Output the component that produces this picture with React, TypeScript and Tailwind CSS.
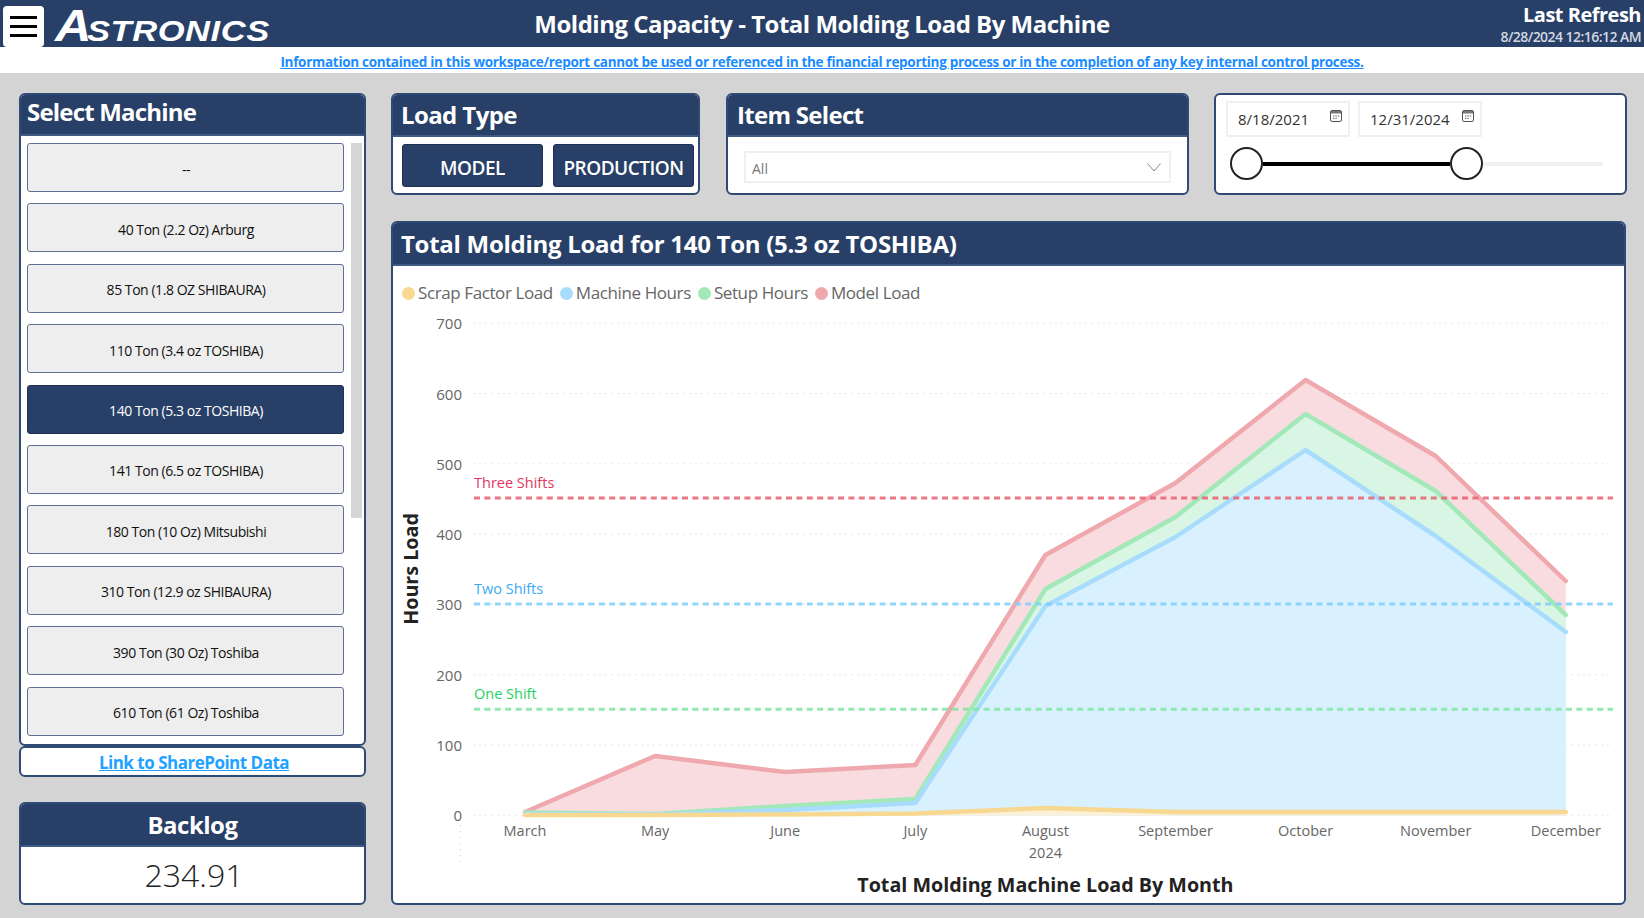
const machines = [
  '--',
  '40 Ton (2.2 Oz) Arburg',
  '85 Ton (1.8 OZ SHIBAURA)',
  '110 Ton (3.4 oz TOSHIBA)',
  '140 Ton (5.3 oz TOSHIBA)',
  '141 Ton (6.5 oz TOSHIBA)',
  '180 Ton (10 Oz) Mitsubishi',
  '310 Ton (12.9 oz SHIBAURA)',
  '390 Ton (30 Oz) Toshiba',
  '610 Ton (61 Oz) Toshiba',
];

const months = ['March', 'May', 'June', 'July', 'August', 'September', 'October', 'November', 'December'];
const monthX = months.map((_, i) => 525 + i * 130.1);
const baseY = 815.3;

// y pixel of each series per month, in page coordinates
const series = [
  { name: 'model', fill: '#f8dcdf', line: '#efa9ae', ys: [812, 756, 772, 765, 555, 483, 380, 456, 581] },
  { name: 'setup', fill: '#d9f5e3', line: '#a3e8b9', ys: [812.5, 814, 806, 799, 589, 517, 414, 491, 615] },
  { name: 'machine', fill: '#d9f1ff', line: '#a8dcfd', ys: [814, 814.5, 810, 803, 606, 537, 450, 536, 632] },
  { name: 'scrap', fill: '#fdf0d8', line: '#f7d890', ys: [815, 815, 814.5, 813.5, 808, 812, 812, 812, 812] },
];

const yTicks = [0, 100, 200, 300, 400, 500, 600, 700];
const shifts = [
  { label: 'Three Shifts', y: 498, line: '#e8606e', text: '#e0385f' },
  { label: 'Two Shifts', y: 604, line: '#7fcffb', text: '#3ca9f5' },
  { label: 'One Shift', y: 709.3, line: '#7fe6a3', text: '#1fd163' },
];
const legend = [
  { label: 'Scrap Factor Load', color: 'bg-[#f8d98f]' },
  { label: 'Machine Hours', color: 'bg-[#a8dcfd]' },
  { label: 'Setup Hours', color: 'bg-[#a3e8b9]' },
  { label: 'Model Load', color: 'bg-[#efa9ae]' },
];

const CalendarIcon = () => (
  <svg width="12" height="12" viewBox="0 0 12 12" className="shrink-0">
    <rect x="0.5" y="0.5" width="11" height="11" rx="1.5" fill="none" stroke="#555" />
    <rect x="1" y="1" width="10" height="2.5" fill="#777" />
    <path d="M3 6h1.4M5.4 6h1.4M7.8 6h1.4M3 8.4h1.4M5.4 8.4h1.4" stroke="#555" />
  </svg>
);

const DateBox = ({ value }: { value: string }) => (
  <div className="flex h-[36px] w-[124px] items-center justify-between border-2 border-[#f0f0f0] pr-[6px] pl-[10px] text-[15px] text-[#333]">
    <span>{value}</span>
    <span className="-mt-[6px]">
      <CalendarIcon />
    </span>
  </div>
);

const PanelHeader = ({ title, className }: { title: string; className: string }) => (
  <div className={`flex items-center border-b-2 border-[#3f5a85] bg-[#284068] font-bold text-white ${className}`}>
    {title}
  </div>
);

const LoadChart = () => {
  const toPoints = (ys: number[]) => ys.map((y, i) => `${monthX[i]},${y}`).join(' ');
  return (
    <svg viewBox="393 266 1230.5 636" className="block h-[636px] w-[1230.5px]">
      {yTicks.map((t) => {
        const y = baseY - t * 0.703;
        return (
          <g key={t}>
            <line x1="473.5" x2="1613" y1={y} y2={y} stroke="#cfcfcf" strokeWidth="1" strokeDasharray="1 5" />
            <text x="462" y={y + 6} textAnchor="end" fontSize="15" fill="#666">
              {t}
            </text>
          </g>
        );
      })}
      <line x1="460.5" x2="460.5" y1="825" y2="866" stroke="#cfcfcf" strokeWidth="1" strokeDasharray="1 5" />

      {series.map((s) => (
        <polygon
          key={s.name}
          points={`${monthX[0]},${baseY} ${toPoints(s.ys)} ${monthX[8]},${baseY}`}
          fill={s.fill}
        />
      ))}
      {series.map((s) => (
        <polyline
          key={s.name}
          points={toPoints(s.ys)}
          fill="none"
          stroke={s.line}
          strokeWidth="4.5"
          strokeLinecap="round"
          strokeLinejoin="round"
        />
      ))}

      {shifts.map((s) => (
        <g key={s.label}>
          <line x1="474" x2="1613" y1={s.y} y2={s.y} stroke={s.line} strokeWidth="3" strokeOpacity="0.85" strokeDasharray="6 4.4" />
          <text x="474" y={s.y - 10} fontSize="14.5" fill={s.text}>
            {s.label}
          </text>
        </g>
      ))}

      {months.map((m, i) => (
        <text key={m} x={monthX[i]} y="836" textAnchor="middle" fontSize="14.5" fill="#666">
          {m}
        </text>
      ))}
      <text x={monthX[4]} y="858" textAnchor="middle" fontSize="14.5" fill="#666">
        2024
      </text>
      <text x={monthX[4]} y="892" textAnchor="middle" fontSize="19.7" fontWeight="700" fill="#222">
        Total Molding Machine Load By Month
      </text>
      <text
        x="0"
        y="0"
        transform="translate(418 569) rotate(-90)"
        textAnchor="middle"
        fontSize="19.7"
        fontWeight="700"
        fill="#222"
      >
        Hours Load
      </text>
    </svg>
  );
};

export default function App() {
  return (
    <div className="flex h-[918px] w-full flex-col overflow-hidden bg-[#d4d4d4] font-['Open_Sans','Noto_Sans',sans-serif]">
      <header className="grid h-[47px] shrink-0 grid-cols-[1fr_auto_1fr] items-center bg-[#284068] pl-[3px]">
        <div className="flex items-center gap-[11px]">
          <button className="flex h-[41px] w-[41px] flex-col items-center justify-center gap-[6.5px] rounded-[4px] bg-white">
            <span className="h-[2.5px] w-[27px] bg-black" />
            <span className="h-[2.5px] w-[27px] bg-black" />
            <span className="h-[2.5px] w-[27px] bg-black" />
          </button>
          <div className="flex origin-left scale-x-115 items-baseline pt-[4px] font-['Liberation_Sans',sans-serif] font-bold text-white italic">
            <span className="text-[44px] leading-[44px]">A</span>
            <span className="-ml-[4px] text-[30px] leading-[44px] tracking-[0.5px]">STRONICS</span>
          </div>
        </div>
        <h1 className="pr-[3px] pb-[6px] text-[24px] font-bold tracking-[-0.5px] text-white">
          Molding Capacity - Total Molding Load By Machine
        </h1>
        <div className="flex flex-col items-end pr-[3px]">
          <span className="-mt-[3px] text-[20px] leading-[24px] font-bold tracking-[-0.5px] text-white">Last Refresh</span>
          <span className="text-[14px] leading-[20px] font-semibold tracking-[-0.55px] text-[#d3d8e0]">
            8/28/2024 12:16:12 AM
          </span>
        </div>
      </header>

      <div className="flex h-[26px] shrink-0 items-center justify-center bg-white pt-[4px]">
        <a className="text-[13.5px] font-bold tracking-[-0.3px] text-[#1a8cff] underline">
          Information contained in this workspace/report cannot be used or referenced in the financial reporting
          process or in the completion of any key internal control process.
        </a>
      </div>

      <main className="flex gap-[25px] pt-[20px] pl-[19px]">
        <div className="flex w-[347px] flex-col">
          <section className="h-[653px] overflow-hidden rounded-[6px] border-2 border-[#2f4a75] bg-white">
            <PanelHeader title="Select Machine" className="h-[41px] pb-[5px] pl-[6px] text-[24px] tracking-[-0.8px]" />
            <div className="flex gap-[7px] pt-[7px] pl-[6px]">
              <div className="flex w-[317px] flex-col gap-[11.4px]">
                {machines.map((m) => {
                  const selected = m.startsWith('140');
                  return (
                    <button
                      key={m}
                      className={`flex h-[49px] items-center justify-center rounded-[3px] border pt-[3px] pl-[1px] text-[14px] tracking-[-0.45px] ${
                        selected
                          ? 'border-[#1e3152] bg-[#284068] text-white'
                          : 'border-[#5d7093] bg-[#eeeeee] text-[#111]'
                      }`}
                    >
                      {m}
                    </button>
                  );
                })}
              </div>
              <div className="h-[375px] w-[11px] bg-[#d6d6d6]" />
            </div>
          </section>
          <a className="flex h-[31px] items-center justify-center rounded-[6px] border-2 border-[#2f4a75] bg-white pt-[3px] pl-[3px] text-[17px] font-bold tracking-[-0.5px] text-[#1fa2ff] underline">
            Link to SharePoint Data
          </a>
          <section className="mt-[25px] h-[103px] overflow-hidden rounded-[6px] border-2 border-[#2f4a75] bg-white">
            <PanelHeader title="Backlog" className="h-[43px] justify-center text-[24px] tracking-[-0.5px]" />
            <div className="flex h-[56px] items-center justify-center pl-[3px] text-[32px] font-light text-[#222]">234.91</div>
          </section>
        </div>

        <div className="flex w-[1236px] flex-col gap-[26px]">
          <div className="flex">
            <section className="h-[102px] w-[309px] overflow-hidden rounded-[6px] border-2 border-[#2f4a75] bg-white">
              <PanelHeader title="Load Type" className="h-[42px] pl-[8px] text-[24px] tracking-[-0.6px]" />
              <div className="flex gap-[10px] pt-[7px] pl-[9px]">
                {['MODEL', 'PRODUCTION'].map((t) => (
                  <button
                    key={t}
                    className="flex h-[43px] w-[141px] items-center justify-center rounded-[3px] border border-[#1e3152] bg-[#284068] pt-[5px] text-[19px] font-semibold tracking-[-0.5px] text-white"
                  >
                    {t}
                  </button>
                ))}
              </div>
            </section>
            <section className="ml-[26px] h-[102px] w-[463px] overflow-hidden rounded-[6px] border-2 border-[#2f4a75] bg-white">
              <PanelHeader title="Item Select" className="h-[42px] pl-[9px] text-[24px] tracking-[-0.7px]" />
              <div className="px-[16px] pt-[14px]">
                <div className="flex h-[32px] items-center justify-between border-2 border-[#f0f0f0] pr-[8px] pl-[6px] text-[14px] text-[#777]">
                  <span className="pt-[3px]">All</span>
                  <svg width="14" height="9" viewBox="0 0 14 9" fill="none" stroke="#888" strokeWidth="1">
                    <path d="M0.5 0.5 7 8 13.5 0.5" />
                  </svg>
                </div>
              </div>
            </section>
            <section className="ml-[25px] h-[102px] w-[413px] rounded-[6px] border-2 border-[#2f4a75] bg-white pt-[6px] pl-[10px]">
              <div className="flex gap-[8px]">
                <DateBox value="8/18/2021" />
                <DateBox value="12/31/2024" />
              </div>
              <div className="mt-[10px] flex w-[377px] items-center pl-[4px]">
                <span className="h-[33px] w-[33px] shrink-0 rounded-full border-[2.5px] border-[#222] bg-white" />
                <span className="h-[4px] w-[187px] bg-black" />
                <span className="h-[33px] w-[33px] shrink-0 rounded-full border-[2.5px] border-[#222] bg-white" />
                <span className="h-[4px] flex-1 bg-[#f1f1f1]" />
              </div>
            </section>
          </div>

          <section className="h-[684px] w-[1234.5px] overflow-hidden rounded-[6px] border-2 border-[#2f4a75] bg-white">
            <PanelHeader title="Total Molding Load for 140 Ton (5.3 oz TOSHIBA)" className="h-[43px] pl-[8px] text-[24px] tracking-[-0.28px]" />
            <div className="flex h-0 gap-[7px] pl-[9px]">
              {legend.map((l) => (
                <div key={l.label} className="mt-[15px] flex h-[24px] items-center gap-[3px] text-[17px] tracking-[-0.4px] text-[#666]">
                  <span className={`h-[13px] w-[13px] rounded-full ${l.color}`} />
                  <span>{l.label}</span>
                </div>
              ))}
            </div>
            <LoadChart />
          </section>
        </div>
      </main>
    </div>
  );
}
